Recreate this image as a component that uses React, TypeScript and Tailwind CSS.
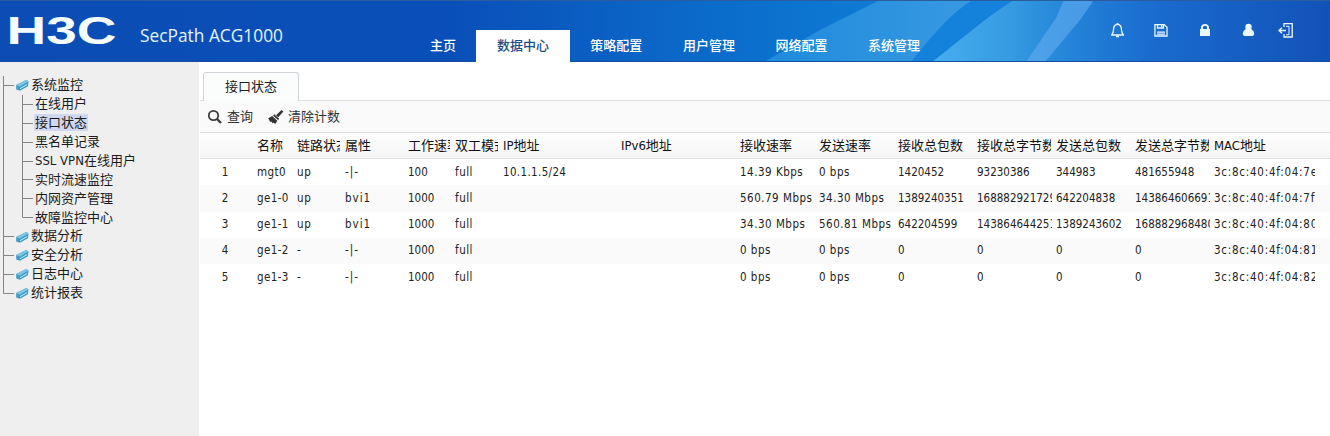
import { useState } from "react";

type Row = string[];

const NAV = ["主页", "数据中心", "策略配置", "用户管理", "网络配置", "系统管理"];

const TREE: { label: string; children?: string[] }[] = [
	{
		label: "系统监控",
		children: [
			"在线用户",
			"接口状态",
			"黑名单记录",
			"SSL VPN在线用户",
			"实时流速监控",
			"内网资产管理",
			"故障监控中心",
		],
	},
	{ label: "数据分析" },
	{ label: "安全分析" },
	{ label: "日志中心" },
	{ label: "统计报表" },
];

const COLUMNS = [
	"",
	"名称",
	"链路状态",
	"属性",
	"工作速率",
	"双工模式",
	"IP地址",
	"IPv6地址",
	"接收速率",
	"发送速率",
	"接收总包数",
	"接收总字节数",
	"发送总包数",
	"发送总字节数",
	"MAC地址",
];

const ROWS: Row[] = [
	["1", "mgt0", "up", "-|-", "100", "full", "10.1.1.5/24", "", "14.39 Kbps", "0 bps", "1420452", "93230386", "344983", "481655948", "3c:8c:40:4f:04:7e"],
	["2", "ge1-0", "up", "bvi1", "1000", "full", "", "", "560.79 Mbps", "34.30 Mbps", "1389240351", "168882921729", "642204838", "143864606691", "3c:8c:40:4f:04:7f"],
	["3", "ge1-1", "up", "bvi1", "1000", "full", "", "", "34.30 Mbps", "560.81 Mbps", "642204599", "143864644251", "1389243602", "168882968480", "3c:8c:40:4f:04:80"],
	["4", "ge1-2", "-", "-|-", "1000", "full", "", "", "0 bps", "0 bps", "0", "0", "0", "0", "3c:8c:40:4f:04:81"],
	["5", "ge1-3", "-", "-|-", "1000", "full", "", "", "0 bps", "0 bps", "0", "0", "0", "0", "3c:8c:40:4f:04:82"],
];

const GRID =
	"grid grid-cols-[57px_40px_48px_63px_47px_48px_118px_119px_79px_79px_79px_79px_79px_79px_101px] items-center whitespace-nowrap";

const cellClass = (j: number) => {
	if (j === 0) return "w-[50px] text-center";
	if (j === 1) return "tracking-[0.4px]";
	if (j === 2) return "mr-[4px] tracking-[0.8px]";
	if (j === 3) return "mr-[4px] tracking-[1px]";
	if (j === 5) return "mr-[4px] tracking-[0.5px]";
	if (j === 6) return "mr-[4px] tracking-[0.35px]";
	if (j === 8 || j === 9) return "mr-[4px] tracking-[0.5px]";
	if (j === 14) return "tracking-[0.75px]";
	return "mr-[4px]";
};

function HeaderArt() {
	return (
		<svg
			className="absolute inset-0"
			width="1330"
			height="62"
			viewBox="0 0 1330 62">
			<defs>
				<linearGradient id="base" x1="0" x2="1">
					<stop offset="0" stopColor="#0b4db4" />
					<stop offset="0.34" stopColor="#0a4fb9" />
					<stop offset="0.47" stopColor="#0b62c5" />
					<stop offset="0.6" stopColor="#0b74cf" />
					<stop offset="0.75" stopColor="#1683d8" />
					<stop offset="0.86" stopColor="#1a6ccf" />
					<stop offset="1" stopColor="#1252b8" />
				</linearGradient>
				<linearGradient id="glow" x1="0" x2="1">
					<stop offset="0" stopColor="#45aef0" />
					<stop offset="0.3" stopColor="#379ce2" />
					<stop offset="1" stopColor="#1a6fd0" stopOpacity="0" />
				</linearGradient>
				<linearGradient id="ray" x1="0" x2="1">
					<stop offset="0" stopColor="#1f8bdc" />
					<stop offset="1" stopColor="#3a9ae2" />
				</linearGradient>
			</defs>
			<rect width="1330" height="62" fill="url(#base)" />
			<path d="M764 62L820 30L880 0H990L932 62Z" fill="url(#ray)" />
			<path d="M932 62L1010 0H1180L1140 62Z" fill="url(#glow)" />
			<path d="M911 62C930 38 950 14 972 0H1014C985 18 955 42 932 62Z" fill="#1481da" />
			<path d="M1026 62L1056 18L1064 0H1094L1080 20L1045 62Z" fill="#62adf0" opacity="0.6" />
			<rect width="1330" height="1" fill="#2b5d9b" />
			<rect y="61" width="1330" height="1" fill="#174c9e" />
		</svg>
	);
}

function HeaderIcons() {
	return (
		<div className="absolute left-[1109px] top-[22px] flex gap-[28px] text-[#eaf8ff]">
			<svg width="16" height="17" viewBox="0 0 16 17" fill="none" stroke="currentColor" strokeWidth="1.3">
				<path d="M2 13H15M3 12.5C4.8 10.5 4.3 8 4.8 5.5C5.3 3.3 6.8 2.4 8.5 2.4S11.7 3.3 12.2 5.5C12.7 8 12.2 10.5 14 12.5" />
				<path d="M8.5 1V2.4M7 14.4H10" strokeWidth="1.7" />
			</svg>
			<svg width="16" height="17" viewBox="0 0 16 17" fill="none" stroke="currentColor" strokeWidth="1.3">
				<path d="M1.9 2.6H11.2L14 5.2V14H1.9Z" />
				<path d="M4.5 2.6V6H10.5V2.6M4 10.2H12M4 12.2H12" />
				<path d="M8.7 3V5.2" strokeWidth="1.6" />
			</svg>
			<svg width="16" height="17" viewBox="0 0 16 17" fill="currentColor">
				<path d="M3 7H4V5.5C4 3.3 5.7 2 8 2S12 3.3 12 5.5V7H13V14H3ZM6 7H10V5.6C10 4.4 9.2 3.7 8 3.7S6 4.4 6 5.6Z" />
			</svg>
			<svg width="16" height="17" viewBox="0 0 16 17" fill="currentColor">
				<circle cx="7.5" cy="5" r="3.2" />
				<path d="M4.8 7H10.2C12.3 8.5 13.2 10 13.2 11.8C13.2 13.8 11.6 14 10.5 14H4.5C3.3 14 1.8 13.8 1.8 11.8C1.8 10 2.7 8.5 4.8 7Z" />
			</svg>
			<svg className="-ml-[7px]" width="16" height="17" viewBox="0 0 16 17" fill="none" stroke="currentColor" strokeWidth="1.3">
				<path d="M6 5V1.7H14.2V15H6V12" />
				<path d="M8 4.3H11V12.8H8" strokeWidth="1" />
				<path d="M1 8.5H8M4 5.8L1 8.5L4 11.2" strokeWidth="1.5" />
			</svg>
		</div>
	);
}

function BookIcon() {
	return (
		<svg className="shrink-0" width="15" height="14" viewBox="0 0 15 14">
			<path d="M1.2 7L11 2L13.5 3.2L13 8.2L5 12.8L1.2 11.6Z" fill="#3f9fc9" />
			<path d="M1.2 7L11 2L13.5 3.2L5 8.5Z" fill="#7cc6e6" />
			<path d="M5 10.7L12 6.6" stroke="#d8f0f8" strokeWidth="0.9" />
		</svg>
	);
}

function Sidebar({ active, onSelect }: { active: string; onSelect: (s: string) => void }) {
	return (
		<aside className="w-[199px] shrink-0 bg-[#efefef] pt-[14px] text-[13px] text-[#1c1c1c]">
			{TREE.map((node, i) => (
				<div key={node.label}>
					<div className="flex h-[18.9px] items-center whitespace-nowrap">
						<svg className="shrink-0" width="15" height="19" stroke="#858585">
							<path d={i === TREE.length - 1 ? "M3.5 0V9.5H14" : "M3.5 0V19M3.5 9.5H14"} fill="none" />
						</svg>
						<BookIcon />
						<span className="mb-[2px] ml-px leading-[17px]">{node.label}</span>
					</div>
					{node.children?.map((child, j) => (
						<div
							key={child}
							onClick={() => onSelect(child)}
							className="flex h-[18.9px] cursor-pointer items-center whitespace-nowrap">
							<svg className="shrink-0" width="34" height="19" stroke="#858585" fill="none">
								<path d="M3.5 0V19" />
								<path d={j === node.children!.length - 1 ? "M22.5 0V9.5H33" : "M22.5 0V19M22.5 9.5H33"} />
							</svg>
							<span
								className={`mb-px px-px leading-[17px] ${child === active ? "bg-[#cfd8ee]" : ""}`}>
								{child}
							</span>
						</div>
					))}
				</div>
			))}
		</aside>
	);
}

export default function App() {
	const [nav, setNav] = useState<string>("数据中心");
	const [page, setPage] = useState<string>("接口状态");

	return (
		<div className="flex h-[436px] w-[1330px] flex-col overflow-hidden bg-white font-['DejaVu_Sans_Condensed','Noto_Sans_CJK_SC',sans-serif]">
			<header className="relative h-[62px] shrink-0 overflow-hidden">
				<HeaderArt />
				<div className="relative flex h-full">
					<svg className="shrink-0" width="410" height="62" fill="#f4fcff">
						<text x="6.5" y="43.5" fontSize="38" fontWeight="bold" fontFamily="Liberation Sans" textLength="110" lengthAdjust="spacingAndGlyphs">
							H3C
						</text>
						<text x="140" y="42" fontSize="17.5" fontFamily="Open Sans" fill="#e3f5ff" textLength="143" lengthAdjust="spacingAndGlyphs">
							SecPath ACG1000
						</text>
					</svg>
					<nav className="flex items-end text-[13px] font-medium">
						{NAV.map((item) => (
							<button
								key={item}
								onClick={() => setNav(item)}
								className={`h-[32px] cursor-pointer first:w-[66px] ${
									item === nav
										? "w-[94px] bg-white text-[#1d4d86]"
										: "w-[92.6px] text-white"
								}`}>
								{item}
							</button>
						))}
					</nav>
				</div>
				<HeaderIcons />
			</header>
			<div className="flex flex-1">
				<Sidebar active={page} onSelect={setPage} />
				<main className="flex-1 overflow-hidden pl-px">
					<div className="flex h-[39px] items-end border-b border-[#dedede] pl-[3px]">
						<div className="-mb-px flex h-[29px] w-[96px] items-center justify-center rounded-t-[3px] border border-b-0 border-[#cfd4d8] bg-[#fbfcfc] text-[13px] text-[#222]">
							{page}
						</div>
					</div>
					<div className="flex h-[32px] items-center border-b border-[#dcdcdc] bg-[#fafafa] pl-[7px] text-[13px] text-[#333]">
						<svg width="16" height="16" viewBox="0 0 16 16" fill="none" stroke="#3c3c3c">
							<circle cx="6.5" cy="6.5" r="4.7" strokeWidth="1.8" />
							<path d="M10 10L14 14" strokeWidth="2.4" />
						</svg>
						<span className="ml-[4px]">查询</span>
						<svg className="ml-[14px]" width="17" height="16" viewBox="0 0 17 16" fill="#333">
							<path d="M14.6 1L16.4 2.4L11.3 8.3L9 6.2Z" />
							<path d="M7.2 5.2L12.2 9.8L11 11L6 6.4Z" />
							<path d="M5.2 7L10.3 11.7L8.2 15L6.6 13.6L5.8 14.4L4.3 12.4L3.3 12.9L1.2 9.2Z" />
						</svg>
						<span className="ml-[4px]">清除计数</span>
					</div>
					<div className={`${GRID} h-[26px] border-b border-[#dcdcdc] bg-linear-to-b from-white to-[#f4f4f4] text-[13px] text-[#111]`}>
						{COLUMNS.map((col, i) => (
							<div key={i} className="mr-[5px] overflow-hidden">
								{col}
							</div>
						))}
					</div>
					{ROWS.map((row, i) => (
						<div
							key={row[0]}
							className={`${GRID} h-[26.3px] text-[11.5px] text-[#222] ${i % 2 ? "bg-[#fafafa]" : "bg-white"}`}>
							{row.map((cell, j) => (
								<div key={j} className={`overflow-hidden ${cellClass(j)}`}>
									{cell}
								</div>
							))}
						</div>
					))}
				</main>
			</div>
		</div>
	);
}
